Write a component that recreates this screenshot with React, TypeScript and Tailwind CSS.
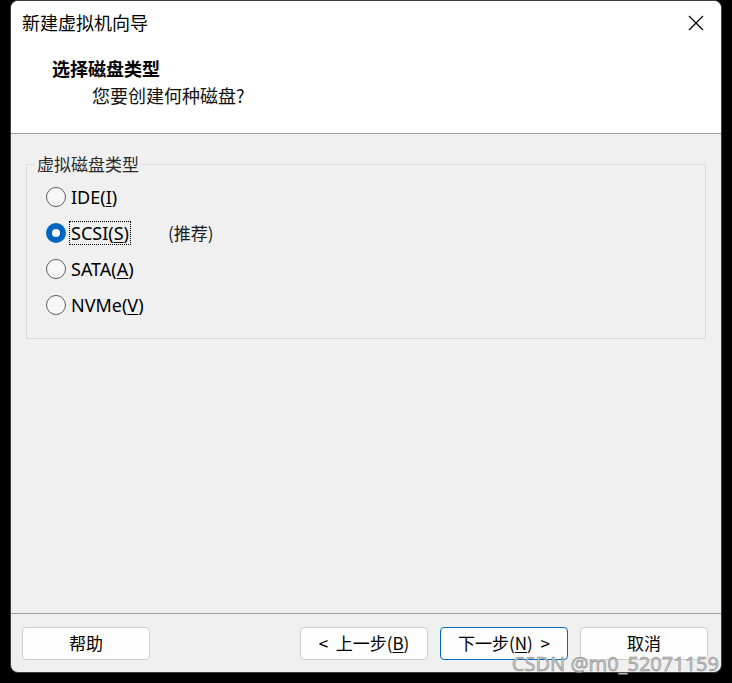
import React from 'react'

const cjk = 'font-["Noto_Sans_CJK_SC","Microsoft_YaHei",sans-serif]'
const ui = 'font-["Noto_Sans","Noto_Sans_CJK_SC",sans-serif]'

type Opt = { key: string; label: string; mn: string; rest: string; checked?: boolean; note?: string }

const options: Opt[] = [
  { key: 'ide', label: 'IDE(', mn: 'I', rest: ')' },
  { key: 'scsi', label: 'SCSI(', mn: 'S', rest: ')', checked: true, note: '(推荐)' },
  { key: 'sata', label: 'SATA(', mn: 'A', rest: ')' },
  { key: 'nvme', label: 'NVMe(', mn: 'V', rest: ')' },
]

const Radio = ({ opt }: { opt: Opt }) => (
  <div className="flex items-center h-[36px]">
    {opt.checked ? (
      <span className="w-[20px] h-[20px] rounded-full bg-[#0067c0] flex items-center justify-center">
        <span className="w-[8px] h-[8px] rounded-full bg-white" />
      </span>
    ) : (
      <span className="w-[20px] h-[20px] rounded-full border border-[#5d5d5d] bg-[#f7f7f7]" />
    )}
    <span
      className={`ml-[4px] px-[1px] text-[18px] leading-[22px] text-black ${ui} ${
        opt.checked ? 'outline outline-1 outline-dotted outline-black' : ''
      }`}
    >
      {opt.label}
      <span className="underline underline-offset-2">{opt.mn}</span>
      {opt.rest}
    </span>
    {opt.note && (
      <span className={`ml-[38px] text-[17px] text-[#1a1a1a] ${cjk}`}>{opt.note}</span>
    )}
  </div>
)

const Btn = ({ children, primary }: { children: React.ReactNode; primary?: boolean }) => (
  <button
    className={`w-[128px] h-[33px] rounded-[4px] bg-[#fdfdfd] text-[17px] text-black flex items-center justify-center ${cjk} ${
      primary ? 'border border-[#0067c0]' : 'border border-[#cfcfcf]'
    }`}
  >
    {children}
  </button>
)

export default function App() {
  return (
    <div className="relative w-[732px] h-[683px] bg-black overflow-hidden">
      <div className="ml-[10px] w-[712px] h-[673px] rounded-[8px] border border-[#3c3c3c] bg-[#f0f0f0] flex flex-col overflow-hidden">
        <div className="bg-white h-[133px] border-b border-[#a0a0a0] flex flex-col">
          <div className="h-[43px] flex items-center justify-between pl-[11px] pr-[17px]">
            <span className={`text-[18px] text-black ${cjk}`}>新建虚拟机向导</span>
            <svg width="16" height="16" viewBox="0 0 16 16">
              <path d="M1 1 L15 15 M15 1 L1 15" stroke="#000" strokeWidth="1.3" fill="none" />
            </svg>
          </div>
          <div className={`pl-[41px] mt-[11px] text-[18px] font-bold leading-[26px] text-black ${cjk}`}>
            选择磁盘类型
          </div>
          <div className={`pl-[81px] mt-[1px] text-[18px] leading-[26px] text-[#111] ${cjk}`}>
            您要创建何种磁盘?
          </div>
        </div>

        <div className="flex-1 flex flex-col px-[15px]">
          <fieldset className="mt-[18px] border border-[#dcdcdc] pl-[19px] pb-[15px] pt-[3px]">
            <legend className={`ml-[-11px] px-[2px] text-[17px] leading-[24px] text-[#2a2a2a] ${cjk}`}>
              虚拟磁盘类型
            </legend>
            {options.map(o => (
              <Radio key={o.key} opt={o} />
            ))}
          </fieldset>
        </div>

        <div className="border-t border-[#a0a0a0] h-[59px] flex items-center pl-[11px] pr-[13px]">
          <Btn>帮助</Btn>
          <div className="flex-1" />
          <div className="flex gap-[12px]">
            <Btn>
              &lt;&nbsp;&nbsp;上一步(<span className="underline underline-offset-2">B</span>)
            </Btn>
            <Btn primary>
              下一步(<span className="underline underline-offset-2">N</span>)&nbsp;&nbsp;&gt;
            </Btn>
            <Btn>取消</Btn>
          </div>
        </div>
      </div>
      <div
        className={`absolute right-[13px] bottom-[8px] text-[20px] leading-[22px] text-[#c4c4c4] ${ui}`}
        style={{ WebkitTextStroke: '0.5px #8a8a8a' }}
      >
        CSDN @m0_52071159
      </div>
    </div>
  )
}
